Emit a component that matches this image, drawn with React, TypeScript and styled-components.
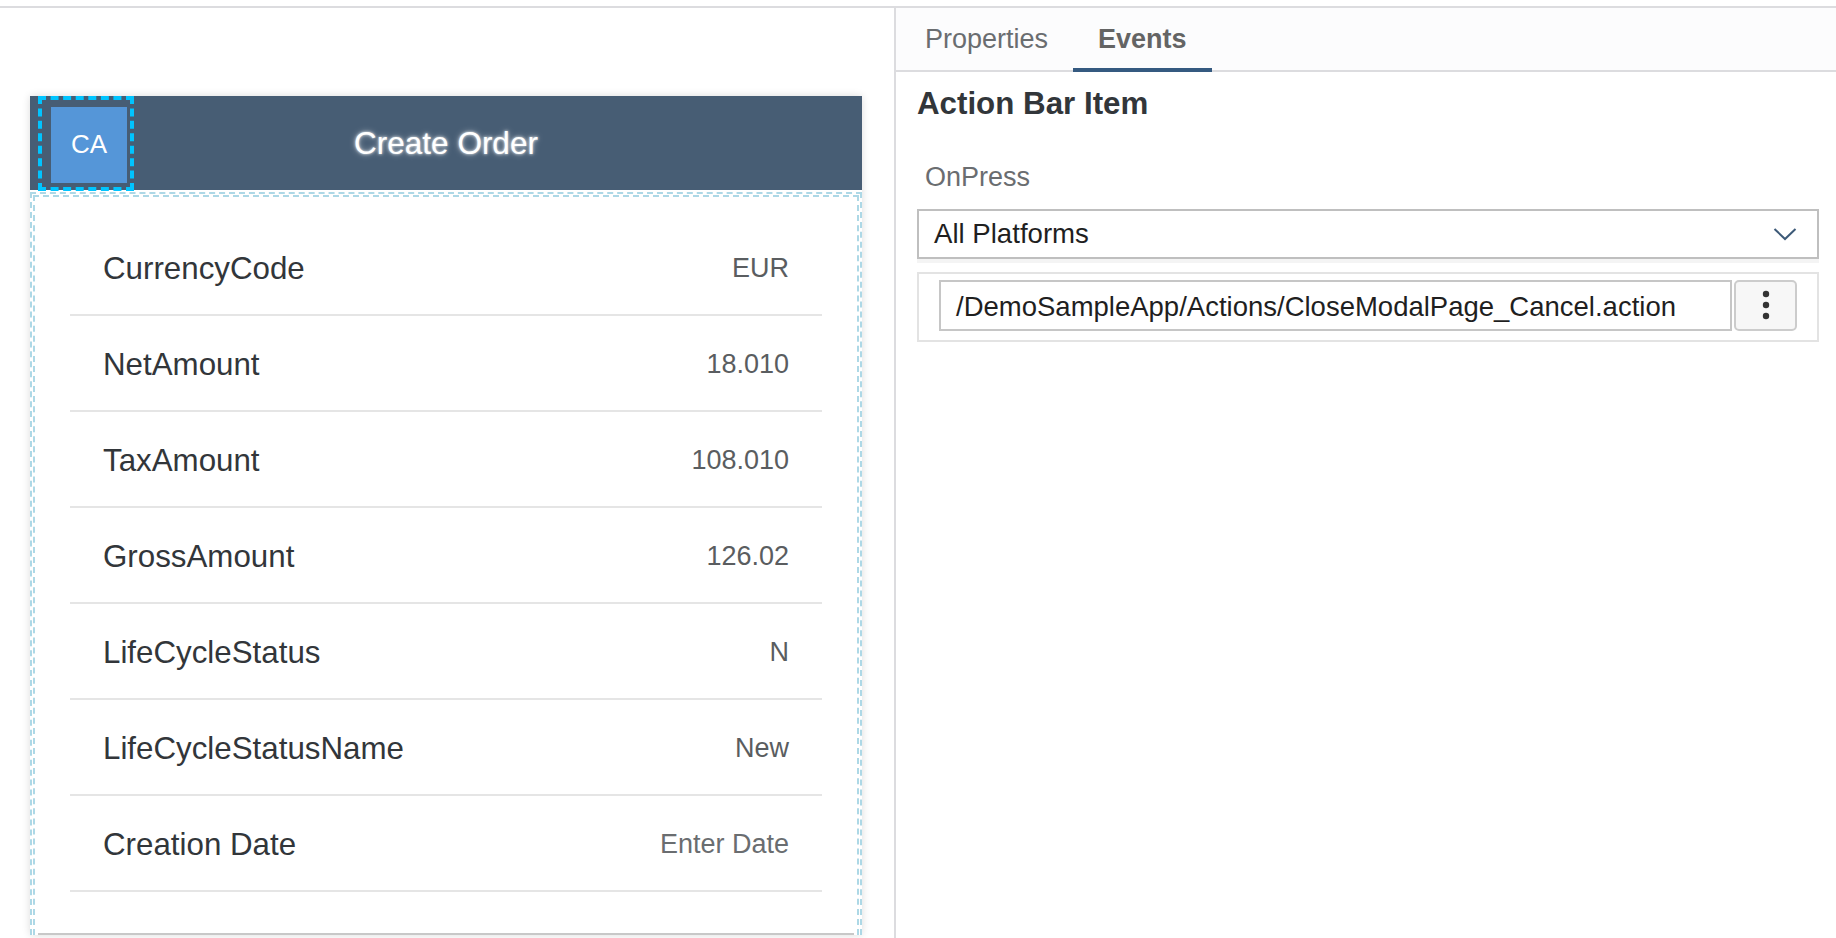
import React from 'react';
import styled, { createGlobalStyle } from 'styled-components';

const GlobalStyle = createGlobalStyle`
  html, body {
    margin: 0;
    padding: 0;
    background: #ffffff;
    font-family: "Liberation Sans", Arial, sans-serif;
  }
  * {
    box-sizing: border-box;
  }
`;

const Page = styled.div`
  height: 938px;
  padding-top: 6px;
  overflow: hidden;
  background: #ffffff;
`;

const Workspace = styled.div`
  display: flex;
  height: 932px;
  border-top: 2px solid #dcdcdf;
`;

const Canvas = styled.div`
  width: 896px;
  flex-shrink: 0;
  border-right: 2px solid #dcdcdf;
  padding: 88px 0 0 30px;
  overflow: hidden;
`;

const Card = styled.div`
  width: 832px;
  background: #ffffff;
  box-shadow: 0 0 8px rgba(0, 0, 0, 0.14);
`;

const ActionBar = styled.div`
  height: 94px;
  background: #475d74;
  display: grid;
  grid-template-columns: 1fr auto 1fr;
  align-items: stretch;
`;

const SelectedItem = styled.div`
  justify-self: start;
  width: 96px;
  height: 95px;
  margin-left: 8px;
  border: 4px dashed #00c4ff;
  display: flex;
  align-items: center;
  justify-content: center;
  position: relative;
  z-index: 1;
`;

const AvatarButton = styled.div`
  width: 76px;
  height: 76px;
  margin: 2px 0 0 6px;
  background: #5596d8;
  color: #ffffff;
  font-size: 26px;
  display: flex;
  align-items: center;
  justify-content: center;
`;

const PageTitle = styled.div`
  align-self: center;
  color: #ffffff;
  font-size: 31.5px;
  text-shadow: 0 0 3px rgba(255, 255, 255, 0.9), 0 0 6px rgba(255, 255, 255, 0.5);
  white-space: nowrap;
`;

const SectionFrame = styled.div`
  margin-top: 2px;
  border: 2px dashed #add8e6;
  border-bottom: none;
  padding: 1px 1px 0 1px;
`;

const SectionInner = styled.div`
  border: 2px dashed #add8e6;
  border-bottom: none;
  padding-top: 23px;
`;

const Row = styled.div`
  height: 96px;
  margin: 0 35px;
  padding: 3px 33px 0 33px;
  border-bottom: 2px solid #e5e5e5;
  display: flex;
  align-items: center;
  justify-content: space-between;
`;

const RowLabel = styled.span`
  font-size: 31.3px;
  color: #32363a;
`;

const RowValue = styled.span<{ $placeholder?: boolean }>`
  font-size: 27px;
  color: ${(p) => (p.$placeholder ? '#6a6d70' : '#5a5d60')};
`;

const ScrollEdge = styled.div`
  height: 2px;
  margin: 41px 3px 0 3px;
  background: #c8c8c8;
`;

const Inspector = styled.div`
  flex: 1;
  display: flex;
  flex-direction: column;
`;

const TabBar = styled.div`
  height: 64px;
  display: flex;
  padding-left: 4px;
  background: #fcfcfd;
  border-bottom: 2px solid #dcdcdf;
`;

const Tab = styled.div<{ $active?: boolean }>`
  position: relative;
  display: flex;
  align-items: center;
  padding: 0 25px;
  font-size: 27px;
  font-weight: ${(p) => (p.$active ? 700 : 400)};
  color: ${(p) => (p.$active ? '#646464' : '#6a6d70')};

  &::after {
    content: '';
    display: ${(p) => (p.$active ? 'block' : 'none')};
    position: absolute;
    left: 0;
    right: 0;
    bottom: -2px;
    height: 4px;
    background: #355a80;
  }
`;

const InspectorBody = styled.div`
  padding: 0 17px 0 21px;
  display: flex;
  flex-direction: column;
`;

const InspectorTitle = styled.div`
  height: 62px;
  padding-top: 2px;
  display: flex;
  align-items: center;
  font-size: 31.3px;
  font-weight: 700;
  color: #32363a;
`;

const FieldLabel = styled.div`
  height: 50px;
  margin: 18px 0 7px 0;
  padding-left: 8px;
  display: flex;
  align-items: center;
  font-size: 27px;
  color: #6a6d70;
`;

const Select = styled.div`
  height: 50px;
  border: 2px solid #bfbfbf;
  padding: 0 20px 0 15px;
  display: flex;
  align-items: center;
  justify-content: space-between;
  font-size: 27.6px;
  color: #1f1f1f;
  box-shadow: 0 4px 0 #f4f4f4;
`;

const BindingBox = styled.div`
  margin-top: 13px;
  height: 70px;
  border: 2px solid #e3e3e3;
  padding: 6px 20px 0 20px;
  display: flex;
  gap: 2px;
`;

const BindingInput = styled.div`
  flex: 1;
  height: 51px;
  border: 2px solid #c6c6c6;
  padding: 3px 0 0 15px;
  display: flex;
  align-items: center;
  font-size: 27.5px;
  color: #1f1f1f;
  white-space: nowrap;
  overflow: hidden;
`;

const MoreButton = styled.div`
  width: 63px;
  height: 51px;
  border: 2px solid #cccccc;
  border-radius: 5px;
  background: #f7f7f7;
  display: flex;
  align-items: center;
  justify-content: center;
`;

const rows: { label: string; value: string; placeholder?: boolean }[] = [
  { label: 'CurrencyCode', value: 'EUR' },
  { label: 'NetAmount', value: '18.010' },
  { label: 'TaxAmount', value: '108.010' },
  { label: 'GrossAmount', value: '126.02' },
  { label: 'LifeCycleStatus', value: 'N' },
  { label: 'LifeCycleStatusName', value: 'New' },
  { label: 'Creation Date', value: 'Enter Date', placeholder: true },
];

const Chevron = () => (
  <svg width="24" height="14" viewBox="0 0 24 14">
    <polyline points="1.5,2 12,12 22.5,2" fill="none" stroke="#3d5a78" strokeWidth="2" />
  </svg>
);

const Kebab = () => (
  <svg width="10" height="32" viewBox="0 0 10 32">
    <circle cx="5" cy="4" r="3.2" fill="#333" />
    <circle cx="5" cy="15" r="3.2" fill="#333" />
    <circle cx="5" cy="26" r="3.2" fill="#333" />
  </svg>
);

const App: React.FC = () => {
  return (
    <>
      <GlobalStyle />
      <Page>
        <Workspace>
          <Canvas>
            <Card>
              <ActionBar>
                <SelectedItem>
                  <AvatarButton>CA</AvatarButton>
                </SelectedItem>
                <PageTitle>Create Order</PageTitle>
                <div />
              </ActionBar>
              <SectionFrame>
                <SectionInner>
                  {rows.map((r) => (
                    <Row key={r.label}>
                      <RowLabel>{r.label}</RowLabel>
                      <RowValue $placeholder={r.placeholder}>{r.value}</RowValue>
                    </Row>
                  ))}
                  <ScrollEdge />
                </SectionInner>
              </SectionFrame>
            </Card>
          </Canvas>
          <Inspector>
            <TabBar>
              <Tab>Properties</Tab>
              <Tab $active>Events</Tab>
            </TabBar>
            <InspectorBody>
              <InspectorTitle>Action Bar Item</InspectorTitle>
              <FieldLabel>OnPress</FieldLabel>
              <Select>
                <span>All Platforms</span>
                <Chevron />
              </Select>
              <BindingBox>
                <BindingInput>/DemoSampleApp/Actions/CloseModalPage_Cancel.action</BindingInput>
                <MoreButton>
                  <Kebab />
                </MoreButton>
              </BindingBox>
            </InspectorBody>
          </Inspector>
        </Workspace>
      </Page>
    </>
  );
};

export default App;
